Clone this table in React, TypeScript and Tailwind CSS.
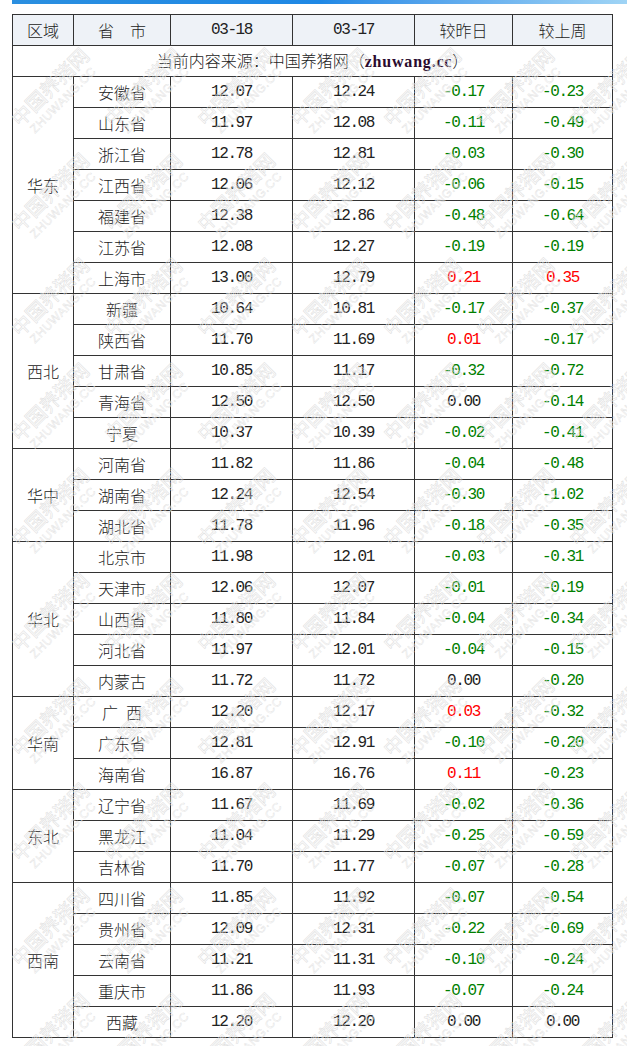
import React from "react"

type Row = [string, string, string, string, string]

const groups: {region: string; rows: Row[]}[] = [
  {
    region: "华东",
    rows: [
      ["安徽省", "12.07", "12.24", "-0.17", "-0.23"],
      ["山东省", "11.97", "12.08", "-0.11", "-0.49"],
      ["浙江省", "12.78", "12.81", "-0.03", "-0.30"],
      ["江西省", "12.06", "12.12", "-0.06", "-0.15"],
      ["福建省", "12.38", "12.86", "-0.48", "-0.64"],
      ["江苏省", "12.08", "12.27", "-0.19", "-0.19"],
      ["上海市", "13.00", "12.79", "0.21", "0.35"],
    ],
  },
  {
    region: "西北",
    rows: [
      ["新疆", "10.64", "10.81", "-0.17", "-0.37"],
      ["陕西省", "11.70", "11.69", "0.01", "-0.17"],
      ["甘肃省", "10.85", "11.17", "-0.32", "-0.72"],
      ["青海省", "12.50", "12.50", "0.00", "-0.14"],
      ["宁夏", "10.37", "10.39", "-0.02", "-0.41"],
    ],
  },
  {
    region: "华中",
    rows: [
      ["河南省", "11.82", "11.86", "-0.04", "-0.48"],
      ["湖南省", "12.24", "12.54", "-0.30", "-1.02"],
      ["湖北省", "11.78", "11.96", "-0.18", "-0.35"],
    ],
  },
  {
    region: "华北",
    rows: [
      ["北京市", "11.98", "12.01", "-0.03", "-0.31"],
      ["天津市", "12.06", "12.07", "-0.01", "-0.19"],
      ["山西省", "11.80", "11.84", "-0.04", "-0.34"],
      ["河北省", "11.97", "12.01", "-0.04", "-0.15"],
      ["内蒙古", "11.72", "11.72", "0.00", "-0.20"],
    ],
  },
  {
    region: "华南",
    rows: [
      ["广\u2002西", "12.20", "12.17", "0.03", "-0.32"],
      ["广东省", "12.81", "12.91", "-0.10", "-0.20"],
      ["海南省", "16.87", "16.76", "0.11", "-0.23"],
    ],
  },
  {
    region: "东北",
    rows: [
      ["辽宁省", "11.67", "11.69", "-0.02", "-0.36"],
      ["黑龙江", "11.04", "11.29", "-0.25", "-0.59"],
      ["吉林省", "11.70", "11.77", "-0.07", "-0.28"],
    ],
  },
  {
    region: "西南",
    rows: [
      ["四川省", "11.85", "11.92", "-0.07", "-0.54"],
      ["贵州省", "12.09", "12.31", "-0.22", "-0.69"],
      ["云南省", "11.21", "11.31", "-0.10", "-0.24"],
      ["重庆市", "11.86", "11.93", "-0.07", "-0.24"],
      ["西藏", "12.20", "12.20", "0.00", "0.00"],
    ],
  },
]

const cjk = "font-['Noto_Sans_CJK_SC',sans-serif] font-light"
const mono = "font-['Liberation_Mono','Noto_Sans_CJK_SC',monospace] font-normal tracking-[-1.4px]"
const cell = "border border-[#333] text-center p-0 text-[16px] text-[#222]"

// negative = green, positive = red, zero stays black
function changeColor(v: string) {
  const n = parseFloat(v)
  if (n < 0) return "text-[#008000]"
  if (n > 0) return "text-[#ff0000]"
  return "text-[#111]"
}

// faint diagonal site watermark tiled over the table
function Watermarks() {
  const marks = []
  for (let r = 0; r < 10; r++) {
    for (let c = 0; c < 7; c++) {
      marks.push(
        <div
          key={`${r}-${c}`}
          className="absolute flex flex-col items-center -translate-x-1/2 -translate-y-1/2 -rotate-45 leading-none whitespace-nowrap"
          style={{left: c * 93 + 55, top: r * 105 + 92}}
        >
          <span className="font-['Noto_Sans_CJK_SC',sans-serif] text-[20px] text-transparent [-webkit-text-stroke:0.5px_#dcdcdc]">
            中国养猪网
          </span>
          <span className="font-['Liberation_Sans',sans-serif] text-[12px] tracking-[0.5px] text-transparent [-webkit-text-stroke:0.4px_#e0e0e0] mt-[3px]">
            ZHUWANG.CC
          </span>
        </div>
      )
    }
  }
  return <div className="absolute inset-0 overflow-hidden pointer-events-none">{marks}</div>
}

export default function App() {
  return (
    <div className="w-[627px] h-[1046px] bg-white relative overflow-hidden">
      <div className="ml-[12px] h-[4px] bg-gradient-to-r from-[#2a8fe0] via-[#1e88e5] to-[#9fd4f5]" />
      <div className="pt-[10px] pl-[12px]">
        <table className="border-collapse table-fixed w-[600px]">
          <colgroup>
            <col className="w-[61px]" />
            <col className="w-[97px]" />
            <col className="w-[122px]" />
            <col className="w-[122px]" />
            <col className="w-[98px]" />
            <col className="w-[100px]" />
          </colgroup>
          <thead>
            <tr className="h-[31px] bg-[#eef2f7]">
              <th className={`${cell} ${cjk}`}>区域</th>
              <th className={`${cell} ${cjk}`}>省{"\u3000"}市</th>
              <th className={`${cell} ${mono}`}>03-18</th>
              <th className={`${cell} ${mono}`}>03-17</th>
              <th className={`${cell} ${cjk}`}>较昨日</th>
              <th className={`${cell} ${cjk}`}>较上周</th>
            </tr>
          </thead>
          <tbody>
            <tr className="h-[31px]">
              <td colSpan={6} className={`${cell} ${cjk}`}>
                当前内容来源：中国养猪网（
                <span className="font-['Liberation_Serif',serif] font-bold text-[#2a0b2e] tracking-[0.8px]">
                  zhuwang.cc
                </span>
                ）
              </td>
            </tr>
            {groups.map((g) =>
              g.rows.map((row, i) => (
                <tr key={g.region + row[0]} className="h-[31px]">
                  {i === 0 && (
                    <td rowSpan={g.rows.length} className={`${cell} ${cjk}`}>
                      {g.region}
                    </td>
                  )}
                  <td className={`${cell} ${cjk}`}>{row[0]}</td>
                  <td className={`${cell} ${mono}`}>{row[1]}</td>
                  <td className={`${cell} ${mono}`}>{row[2]}</td>
                  <td className={`${cell} ${mono} ${changeColor(row[3])}`}>{row[3]}</td>
                  <td className={`${cell} ${mono} ${changeColor(row[4])}`}>{row[4]}</td>
                </tr>
              ))
            )}
          </tbody>
        </table>
      </div>
      <Watermarks />
    </div>
  )
}
